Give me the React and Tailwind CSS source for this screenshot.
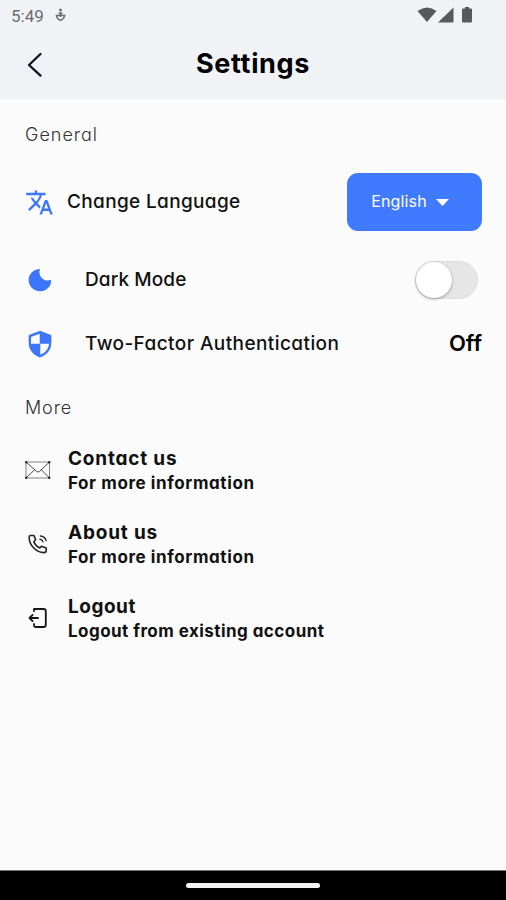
import React, { useState } from 'react';
import { MdOutlineTranslate } from 'react-icons/md';

const BackIcon = () => (
  <svg width="20" height="28" viewBox="0 0 20 28" fill="none" stroke="#12121a" strokeWidth="2.3" strokeLinecap="round" strokeLinejoin="round">
    <path d="M15.5 3 L4 14 L15.5 24.6" />
  </svg>
);

const MoonIcon = () => (
  <svg width="24" height="24" viewBox="0 0 24 24" fill="#3b76fb">
    <path d="M12 1 C9.6 6.4 14.7 15.2 23 11.7 C24 18 18.2 23.5 12 23.3 C5.7 23.2 .6 18.2 .6 12 C.6 6 5.5 1 12 1Z" />
  </svg>
);

const ShieldIcon = () => (
  <svg width="24" height="28" viewBox="0 0 24 28">
    <path d="M12 .8 L22.4 4.7 Q23.3 5 23.3 6 V12.8 C23.3 20.2 18.5 25.5 12 27.4 C5.5 25.5 .7 20.2 .7 12.8 V6 Q.7 5 1.6 4.7Z" fill="#3b76fb" />
    <path d="M11.7 3.8 V13.7 H3 V6.9Z M12.3 13.7 H21 C20.5 19.2 17 22.9 12.3 24.6Z" fill="#fbfbfb" />
  </svg>
);

const MailIcon = () => (
  <svg width="26" height="18" viewBox="0 0 26 18" fill="none" stroke="#333" strokeWidth="0.9">
    <rect x="1" y="1" width="23.5" height="16" stroke="#777" />
    <path d="M1 1 L11.5 10.4 Q13 11.7 14.5 10.4 L24.5 1 M1 17 L9.6 8.8 M24.5 17 L16.2 8.8" />
    <path d="M.2 .2 h2 v2 h-2z M23.3 .2 h2 v2 h-2z M.2 15.8 h2 v2 h-2z M23.3 15.8 h2 v2 h-2z" fill="#111" stroke="none" />
  </svg>
);

const PhoneIcon = () => (
  <svg width="20" height="20" viewBox="0 0 20 20" fill="none" stroke="#252525" strokeWidth="1.6" strokeLinecap="round" strokeLinejoin="round">
    <path d="M2.2 1.5 H6 L7.6 5.8 L5.8 7.7 C6.8 10.4 9 12.6 11.8 13.9 L13.5 12.2 L18.2 14 V16.8 Q18 18.6 15.8 18.6 C8.2 18.4 1.5 11.5 1.1 3.7 Q1 2 2.2 1.5Z" />
    <path d="M12.4 2 Q16.8 2.3 18.2 6.6 M12 5.3 Q14.4 5.5 14.9 7.8" strokeWidth="1.4" />
  </svg>
);

const LogoutIcon = () => (
  <svg width="20" height="22" viewBox="0 0 20 22" fill="none" stroke="#151515" strokeWidth="1.8" strokeLinecap="round" strokeLinejoin="round">
    <path d="M6 2 H15.5 Q17.8 2 17.8 4 V18 Q17.8 20 15.5 20 H8 Q6 20 6 18.4 V17 M6 2.2 V4" />
    <path d="M10 11 H1.5 M4.6 7.9 L1.5 11 L4.6 14.1" />
  </svg>
);

const moreItems = [
  { icon: <MailIcon />, title: 'Contact us', text: 'For more information', titleClass: 'tracking-[0.8px]', textClass: 'tracking-[0.6px]' },
  { icon: <PhoneIcon />, title: 'About us', text: 'For more information', titleClass: 'tracking-[0.8px]', textClass: 'tracking-[0.6px]' },
  { icon: <LogoutIcon />, title: 'Logout', text: 'Logout from existing account', titleClass: 'tracking-[0.5px]', textClass: 'tracking-[0.45px]' }
];

const StatusBar = () => (
  <div className="flex h-8 items-center justify-between pl-[11px] pr-[33px]">
    <div className="flex items-center gap-[11px]">
      <span className="font-[Roboto,sans-serif] text-[17px] leading-8 text-[#6b6c70]">5:49</span>
      <svg className="-mt-0.5" width="11" height="14" viewBox="0 0 11 14" fill="none" stroke="#6b6c70" strokeWidth="1.4">
        <path d="M1.3 7.5 H9.7 Q9.3 10.7 5.5 12.5 Q1.7 10.7 1.3 7.5Z M5.5 4 V9 M3.5 5.5 H7.5" />
        <circle cx="5.5" cy="2" r="1.5" fill="#6b6c70" stroke="none" />
      </svg>
    </div>
    <svg className="-mt-0.5" width="56" height="18" viewBox="0 0 56 18" fill="#58595b">
      <path d="M.5 5 Q10 -2 19.5 5 L10 16Z" />
      <path d="M21 16.5 L36.5 1.5 V16.5Z" />
      <path d="M48 1 h4 v1.5 h2 q1 0 1 1 v12 q0 1 -1 1 h-8 q-1 0 -1 -1 v-12 q0 -1 1 -1 h2z" />
    </svg>
  </div>
);

const App = () => {
  const [darkMode, setDarkMode] = useState(false);

  return (
    <div className="flex h-[900px] w-[506px] flex-col overflow-hidden bg-[#fbfbfb] font-[Inter,sans-serif] text-[#111] [font-feature-settings:'cv11'] whitespace-nowrap">
      {/* Header */}
      <header className="h-[99px] bg-[#f1f2f6]">
        <StatusBar />
        <div className="grid h-[65px] grid-cols-[80px_1fr_80px] items-center">
          <button className="pl-[25px]" onClick={() => window.history.back()} aria-label="Back">
            <BackIcon />
          </button>
          <h1 className="text-center text-[27px] font-bold tracking-[0.65px] text-black">Settings</h1>
        </div>
      </header>

      <main className="flex-1 pl-[25px] pr-6">
        {/* General */}
        <h2 className="mt-[22px] h-7 text-[18px] leading-7 font-light tracking-[1px] text-[#333]">General</h2>
        <div className="mt-6 flex h-[58px] items-center">
          <MdOutlineTranslate className="size-[29px] text-[#3b76fb]" />
          <span className="ml-[13px] flex-1 text-[19px] font-medium tracking-[0.35px]">Change Language</span>
          <button className="flex h-[58px] w-[135px] items-center rounded-[11px] bg-[#407bff] pl-6 text-[16px] text-white">
            <span className="w-[56px] pb-0.5 tracking-[0.15px]">English</span>
            <svg className="ml-[9px]" width="13" height="7" viewBox="0 0 13 7" fill="currentColor">
              <path d="M0 0 H13 L6.5 7Z" />
            </svg>
          </button>
        </div>
        <div className="mt-[17px] flex h-16 items-center pl-[3px]">
          <MoonIcon />
          <span className="ml-[33px] flex-1 text-[19px] font-medium tracking-[0.1px]">Dark Mode</span>
          <button
            role="switch"
            aria-checked={darkMode}
            onClick={() => setDarkMode(!darkMode)}
            className={`mr-1 flex h-[38px] w-[63px] items-center rounded-full border border-[#ddd] ${darkMode ? 'justify-end bg-[#407bff]' : 'bg-[#e6e6e6]'}`}
          >
            <span className="size-9 rounded-full bg-white shadow-[0_1px_3px_rgba(0,0,0,0.35)]" />
          </button>
        </div>
        <div className="flex h-16 items-center pl-[3px]">
          <ShieldIcon />
          <span className="ml-[33px] flex-1 text-[19px] font-medium tracking-[0.42px]">Two-Factor Authentication</span>
          <span className="pb-0.5 text-[22px] font-semibold text-black">Off</span>
        </div>

        {/* More */}
        <h2 className="mt-[18px] h-7 text-[18px] leading-7 font-light tracking-[0.9px] text-[#333]">More</h2>
        <div className="mt-6 flex flex-col gap-6">
          {moreItems.map((item) => (
            <div key={item.title} className="flex h-[50px] items-center">
              <div className="flex w-[26px] justify-center pb-0.5">{item.icon}</div>
              <div className="ml-[17px]">
                <p className={`text-[19px] leading-[25px] font-bold ${item.titleClass}`}>{item.title}</p>
                <p className={`text-[17px] leading-[25px] font-bold ${item.textClass}`}>{item.text}</p>
              </div>
            </div>
          ))}
        </div>
      </main>

      {/* Navigation bar */}
      <footer className="flex h-[30px] items-center justify-center border-t border-[#777] bg-black">
        <div className="h-[5px] w-[134px] rounded-full bg-[#f2f2f2]" />
      </footer>
    </div>
  );
};

export default App;
